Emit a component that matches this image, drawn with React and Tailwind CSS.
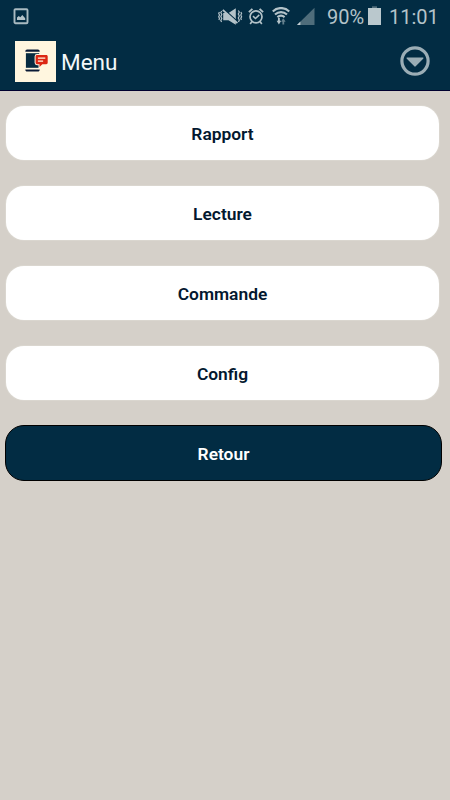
import React from 'react';

const menuItems = ['Rapport', 'Lecture', 'Commande', 'Config'];

const PictureIcon = () => (
  <svg width="16" height="17" viewBox="0 0 16 17" fill="none">
    <rect x="1.500" y="1.200" width="13" height="14" rx="1" stroke="#a9bac1" strokeWidth="1.900" />
    <path d="M4 12V9.500L5.800 8l1.500 1.200L9.300 7l2.900 3.200V12z" fill="#b4c3c9" />
  </svg>
);

const MuteIcon = () => (
  <svg width="25" height="18" viewBox="0 0 25 18" fill="none">
    <path d="M5.200 5h5.300L17.800.2v16.600l-7.300-4.600H5.200z" fill="#b4c3c9" />
    <path d="M6 1.200l13.800 12.600" stroke="#022c43" strokeWidth="1.200" />
    <path d="M4.800 1.800l14.600 13.400" stroke="#b4c3c9" strokeWidth="1.800" />
    <path d="M3.800 3l-1 1.500 1 2-1 2 1 2-1 2 .8 1.500M1.500 4l-.8 1.300.8 1.700-.8 1.700.8 1.700-.6 1.600M20.300 2.500l1 1.500-1 2 1 2-1 2 1 2-.8 2M22.800 4l.8 1.300-.8 1.700.8 1.700-.8 1.700.6 1.600" stroke="#b4c3c9" strokeWidth="1.200" />
  </svg>
);

const AlarmIcon = () => (
  <svg width="16" height="18" viewBox="0 0 16 18" fill="none" stroke="#b4c3c9">
    <circle cx="8" cy="8.800" r="6" strokeWidth="1.700" />
    <path d="M5 8.100l2.500 2.400 3.800-3.600" strokeWidth="1.500" />
    <path d="M.9 4.100L4.400.9M15.100 4.100L11.600.9" strokeWidth="1.900" />
    <path d="M3.800 13.700l-1.600 2.200M12.200 13.700l1.600 2.200" strokeWidth="1.700" />
  </svg>
);

const WifiIcon = () => (
  <svg width="18" height="19" viewBox="0 0 18 19" fill="none">
    <path d="M.8 4.500C5.300-.1 12.700-.1 17.200 4.500M3 7.500C6.500 4.300 11.500 4.300 15 7.500M5.400 10.200C7.600 8.400 10.400 8.400 12.600 10.200" stroke="#b4c3c9" strokeWidth="2.200" />
    <path d="M4.600 13.700h4.600l-2.300 3.800z" fill="#b4c3c9" />
    <path d="M6.900 10.800v4" stroke="#b4c3c9" strokeWidth="1.900" />
    <path d="M11.300 17.500v-5" stroke="#65818e" strokeWidth="1.800" />
    <path d="M9.100 14.800h4.500l-2.300-3.500z" fill="#65818e" />
  </svg>
);

const SignalIcon = () => (
  <svg width="18" height="18" viewBox="0 0 18 18">
    <path d="M0 18L17.500.8V18z" fill="#4f6d7b" />
    <path d="M0 18l3.400-3.400V18z" fill="#c3ced3" />
  </svg>
);

const BatteryIcon = () => (
  <svg width="13" height="19" viewBox="0 0 13 19">
    <path d="M4 .3h5v2H4z" fill="#536f7d" />
    <path d="M0 2h13v17H0z" fill="#bac8cd" />
  </svg>
);

const AppLogo = () => (
  <svg width="41" height="41" viewBox="0 0 41 41" fill="none">
    <path d="M0 0h41v41H0z" fill="#fff6df" />
    <path d="M10.300 10.800c0-1.400.7-2.200 1.800-2.200h10.800c1.100 0 1.800.8 1.800 2.200z" fill="#0a1a36" />
    <path d="M10.900 12.200h13.300v14.600H10.900z" fill="#062b40" />
    <path d="M10.300 28.400h14.400c0 1.400-.7 2.200-1.800 2.200H12.100c-1.100 0-1.800-.8-1.800-2.200z" fill="#0a1a36" />
    <path
      d="M22 14h9.300c.8 0 1.400.6 1.400 1.400v6.400c0 .8-.6 1.400-1.400 1.400h-4L24.500 26v-2.800H22c-.8 0-1.400-.6-1.400-1.400v-6.400c0-.8.6-1.400 1.400-1.400z"
      fill="#dc2613"
      stroke="#fff6df"
      strokeWidth="2"
      paintOrder="stroke"
    />
    <path d="M22.900 17.200h7.400M22.900 20.200h5.200" stroke="#fff6df" strokeWidth="1.200" />
  </svg>
);

const DropdownIcon = () => (
  <svg width="30" height="30" viewBox="0 0 30 30">
    <circle cx="15" cy="15" r="13.100" fill="none" stroke="#9badb5" strokeWidth="3.200" />
    <path d="M7.300 11.500h15.400c.8 0 1 .7.500 1.300l-7.500 7.500c-.4.500-1 .5-1.400 0l-7.500-7.500c-.5-.6-.3-1.300.5-1.300z" fill="#9badb5" />
  </svg>
);

const App = () => {
  return (
    <div className="h-[800px] w-[450px] overflow-hidden bg-[#d5d0c9] font-['Roboto',sans-serif]">
      <header className="h-[91px] border-b border-[#00002f] bg-[#022c43]">
        <div className="flex h-8 items-start pl-[13px] text-[20px] leading-[24px] text-[#b4c3c9]">
          <div className="mt-2"><PictureIcon /></div>
          <div className="ml-[189px] mt-2"><MuteIcon /></div>
          <div className="ml-[5px] mt-2"><AlarmIcon /></div>
          <div className="ml-2 mt-[7px]"><WifiIcon /></div>
          <div className="ml-[7px] mt-[7px]"><SignalIcon /></div>
          <span className="ml-3 mt-[5px] w-[38px] whitespace-nowrap">90%</span>
          <div className="ml-[3px] mt-1.5"><BatteryIcon /></div>
          <span className="ml-2 mt-[5px] whitespace-nowrap">11:01</span>
        </div>
        <div className="flex h-[58px] items-center pl-[15px] pr-5">
          <AppLogo />
          <h1 className="ml-[5px] pt-0.5 text-[22.5px] leading-7 text-[#f4f7f8]">Menu</h1>
          <button className="ml-auto"><DropdownIcon /></button>
        </div>
      </header>
      <main className="pt-[15px]">
        <div className="flex flex-col gap-[26px] pl-1.5">
          {menuItems.map((item) => (
            <button
              key={item}
              className="h-[54px] w-[433px] rounded-[18px] bg-white pt-0.5 text-[17.4px] font-semibold text-[#03182f] shadow-[0_0_0_1px_#dad6cf]"
            >
              {item}
            </button>
          ))}
        </div>
        <button className="ml-[5px] mt-[25px] block h-14 w-[437px] rounded-[19px] border border-black bg-[#022c43] pt-0.5 text-[17.4px] font-semibold text-white">
          Retour
        </button>
      </main>
    </div>
  );
};

export default App;
